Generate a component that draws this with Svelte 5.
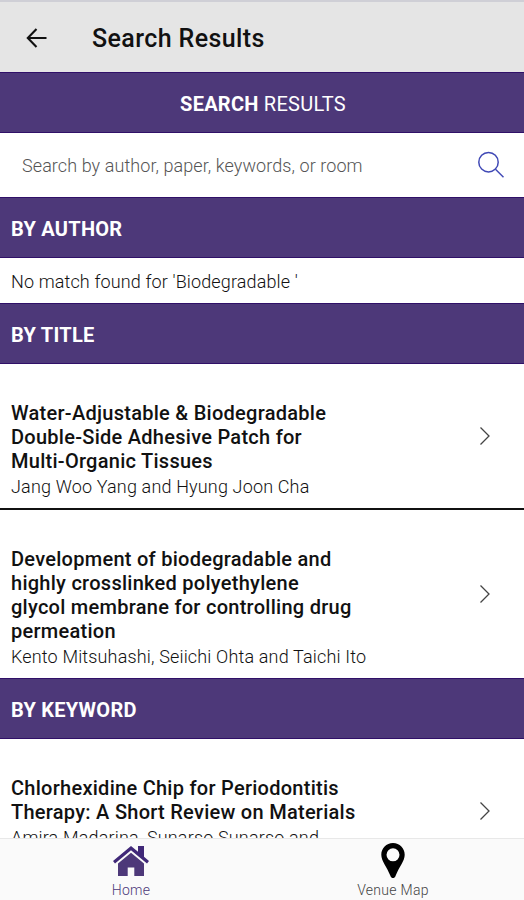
<script>
	let query = '';

	const author = { match: 'Biodegradable ' };

	const titleResults = [
		{
			title: 'Water-Adjustable & Biodegradable\nDouble-Side Adhesive Patch for\nMulti-Organic Tissues',
			authors: 'Jang Woo Yang and Hyung Joon Cha'
		},
		{
			title:
				'Development of biodegradable and\nhighly crosslinked polyethylene\nglycol membrane for controlling drug\npermeation',
			authors: 'Kento Mitsuhashi, Seiichi Ohta and Taichi Ito'
		}
	];

	const keywordResults = [
		{
			title: 'Chlorhexidine Chip for Periodontitis\nTherapy: A Short Review on Materials',
			authors: 'Amira Madarina, Sunarso Sunarso and'
		}
	];
</script>

{#snippet results(items)}
	{#each items as item}
		<a class="result" href="#paper">
			<div class="text">
				<h3>{item.title}</h3>
				<p>{item.authors}</p>
			</div>
			<svg class="chevron" width="12" height="20" viewBox="0 0 12 20">
				<path d="M1.5 1.5 10 10l-8.500 8.500" fill="none" stroke="#444" stroke-width="1.3" />
			</svg>
		</a>
	{/each}
{/snippet}

<div class="screen">
	<header>
		<svg width="24" height="24" viewBox="0 0 24 24">
			<path
				d="M21.500 11H3M11.500 2 2.800 11l8.700 9"
				fill="none"
				stroke="#111"
				stroke-width="2.1"
			/>
		</svg>
		<h1>Search Results</h1>
	</header>

	<main>
		<div class="banner"><span><b>SEARCH</b> RESULTS</span></div>
		<div class="search">
			<input
				type="text"
				placeholder="Search by author, paper, keywords, or room"
				bind:value={query}
			/>
			<svg width="28" height="28" viewBox="0 0 28 28">
				<g fill="none" stroke="#3f48b5" stroke-width="1.5">
					<circle cx="11.5" cy="11.2" r="9.7" />
					<path d="m18.5 18.2 8 8" />
				</g>
			</svg>
		</div>

		<h2>BY AUTHOR</h2>
		<p class="empty">No match found for '{author.match}'</p>

		<h2>BY TITLE</h2>
		{@render results(titleResults)}

		<h2>BY KEYWORD</h2>
		<div class="keywords">
			{@render results(keywordResults)}
		</div>
	</main>

	<nav>
		<a class="active" href="#home">
			<svg width="38" height="34" viewBox="0 0 38 34">
				<path
					d="M19 0 1 15l2 2.400L19 4.200l16 13.200 2-2.400-5-4.200V0h-6v5.800z"
					fill="#402878"
				/>
				<path d="M19 6.800 6 17.500V30h9.700v-8.500h6.600V30H32V17.500z" fill="#4d3879" />
			</svg>
			<span>Home</span>
		</a>
		<a href="#map">
			<svg width="24" height="37" viewBox="0 0 24 37">
				<path
					fill-rule="evenodd"
					d="M12 0C5.300 0 .3 5.200.3 11.700c0 6.400 5.400 11.800 9.200 21.300.9 2.700 4.100 2.700 5 0 3.800-9.500 9.200-14.900 9.200-21.300C23.700 5.200 18.700 0 12 0zm0 5.300a6.500 6.500 0 1 1 0 13 6.500 6.500 0 0 1 0-13z"
				/>
			</svg>
			<span>Venue Map</span>
		</a>
	</nav>
</div>

<style>
	:global(body) {
		margin: 0;
		background: #fff;
	}

	.screen {
		display: flex;
		flex-direction: column;
		height: 900px;
		overflow: hidden;
		font-family: Roboto, sans-serif;
		color: #111;
	}

	h1,
	h2,
	h3,
	p {
		margin: 0;
	}

	a {
		color: inherit;
		text-decoration: none;
	}

	svg {
		display: block;
		flex: none;
	}

	header {
		display: flex;
		flex: none;
		align-items: center;
		gap: 43px;
		box-sizing: border-box;
		height: 72px;
		padding: 3px 0 0 25px;
		border-top: 2px solid #cfcfd6;
		background: #e5e5e5;
	}

	h1 {
		font-size: 25px;
		font-weight: 500;
		letter-spacing: 0.4px;
	}

	main {
		flex: 1;
		min-height: 0;
		overflow: hidden;
	}

	.banner,
	h2 {
		display: flex;
		align-items: center;
		box-sizing: border-box;
		height: 61px;
		border: solid #301068;
		border-width: 1px 0;
		background: #4d3879;
		color: #fff;
		font-size: 20px;
		letter-spacing: 0.25px;
	}

	.banner {
		justify-content: center;
		padding: 2px 0 0 2px;
	}

	.banner b {
		font-weight: 700;
	}

	h2 {
		padding: 2px 11px 0;
		font-weight: 700;
	}

	.search {
		display: flex;
		align-items: center;
		box-sizing: border-box;
		height: 64px;
		padding: 0 19px 0 22px;
	}

	input {
		flex: 1;
		padding: 0;
		border: none;
		outline: none;
		font: 300 18px Roboto, sans-serif;
		letter-spacing: 0.08px;
	}

	input::placeholder {
		color: #555;
	}

	.empty {
		box-sizing: border-box;
		height: 45px;
		padding: 0 11px;
		font-size: 18px;
		font-weight: 300;
		letter-spacing: 0.13px;
		line-height: 47px;
	}

	.result {
		display: flex;
		align-items: center;
		justify-content: space-between;
		padding: 37px 33px 8px 11px;
	}

	.result + .result {
		border-top: 2px solid #111;
	}

	.text {
		width: 350px;
	}

	.keywords .text {
		padding-bottom: 23px;
	}

	.chevron {
		margin-top: -29px;
	}

	h3 {
		font-size: 20px;
		font-weight: 500;
		letter-spacing: 0.27px;
		line-height: 24px;
		white-space: pre-line;
	}

	.text p {
		font-size: 18px;
		font-weight: 300;
		letter-spacing: 0.16px;
		line-height: 27px;
		white-space: nowrap;
	}

	nav {
		display: flex;
		flex: none;
		box-sizing: border-box;
		height: 62px;
		border-top: 1px solid #e8e8e8;
		background: #fafafa;
	}

	nav a {
		display: flex;
		flex: 1;
		flex-direction: column;
		align-items: center;
		justify-content: flex-end;
		color: #444;
		font-size: 14px;
		font-weight: 300;
		letter-spacing: 0.3px;
		line-height: 20px;
	}

	nav svg {
		color: #000;
	}

	nav .active {
		color: #4d3879;
	}
</style>
